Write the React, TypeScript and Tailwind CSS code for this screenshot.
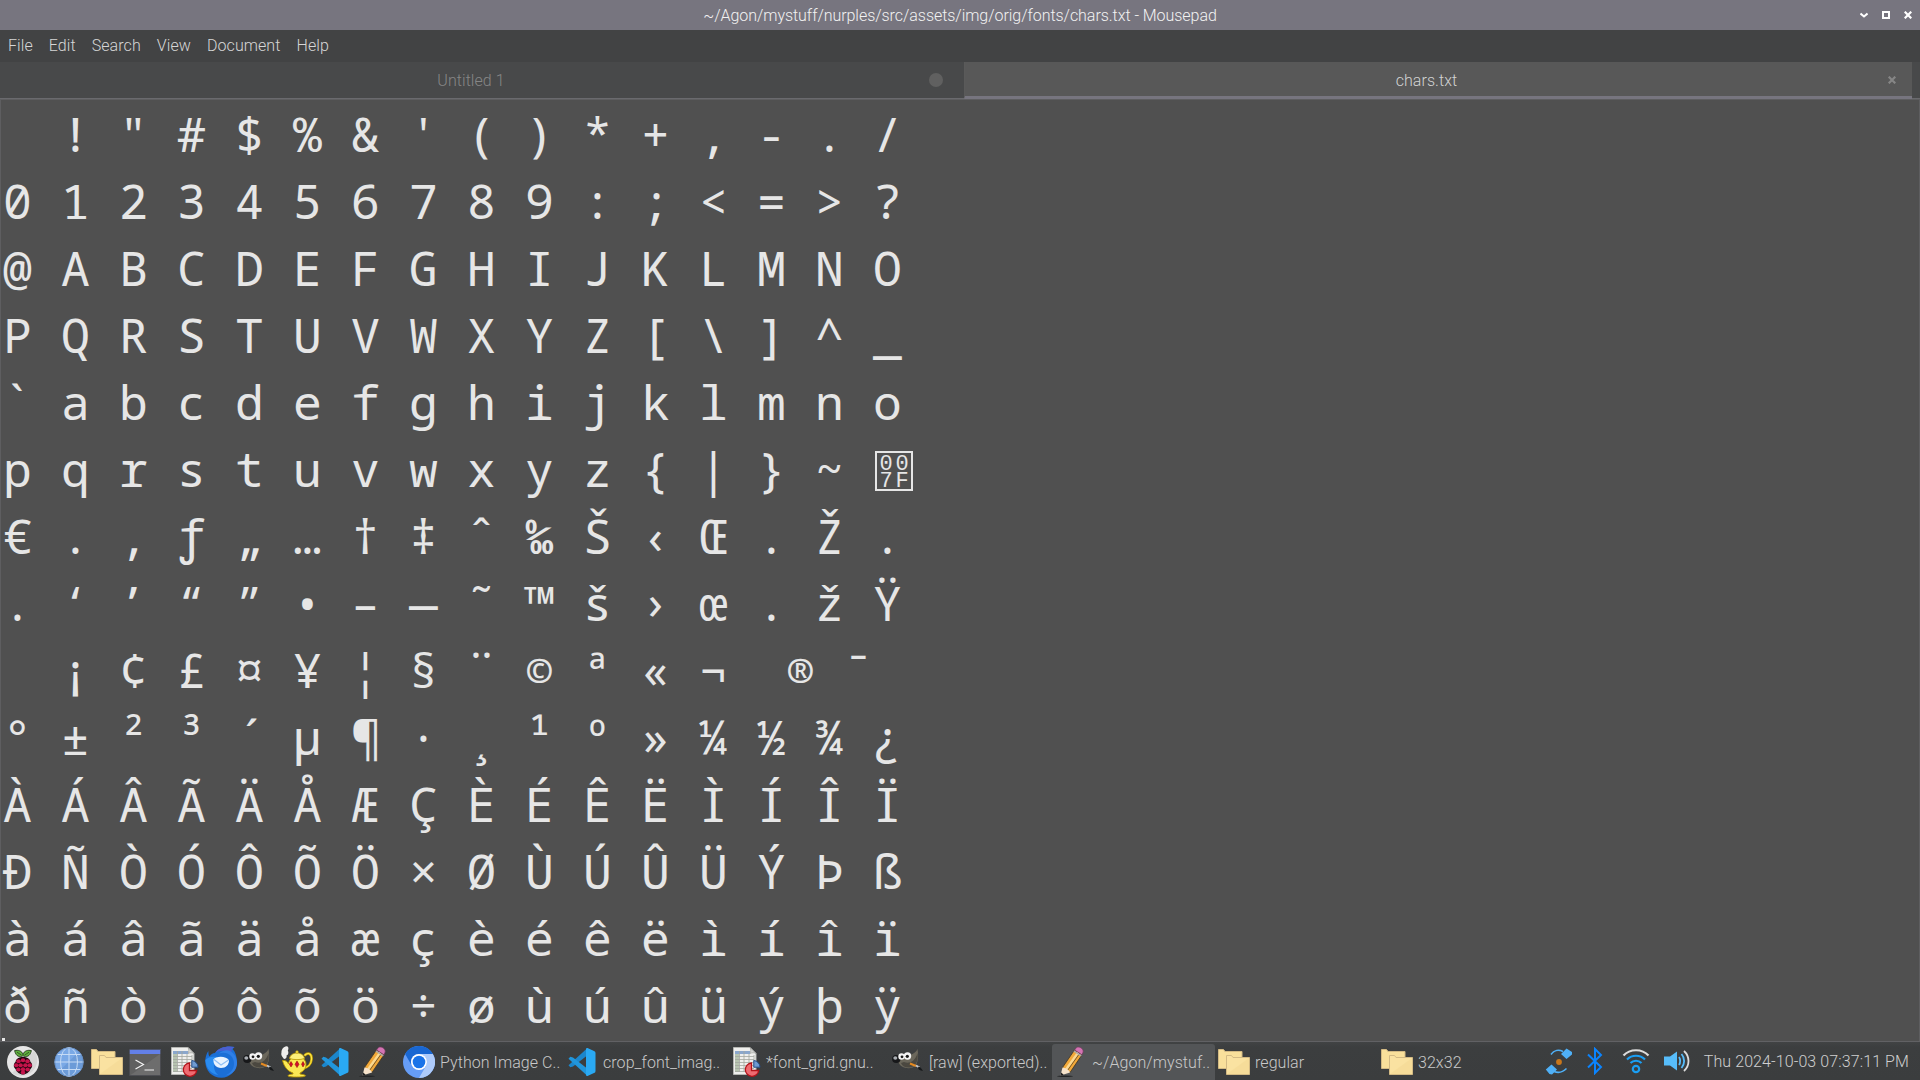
import type { ReactNode } from "react";

const LINES = [
  "  ! \" # $ % & ' ( ) * + , - . /",
  "0 1 2 3 4 5 6 7 8 9 : ; < = > ?",
  "@ A B C D E F G H I J K L M N O",
  "P Q R S T U V W X Y Z [ \\ ] ^ _",
  "` a b c d e f g h i j k l m n o",
  "p q r s t u v w x y z { | } ~ ",
  "€ . ‚ ƒ „ … † ‡ ˆ ‰ Š ‹ Œ . Ž .",
  ". ‘ ’ “ ” • – — ˜ ™ š › œ . ž Ÿ",
  "  ¡ ¢ £ ¤ ¥ ¦ § ¨ © ª « ¬  ® ¯",
  "° ± ² ³ ´ µ ¶ · ¸ ¹ º » ¼ ½ ¾ ¿",
  "À Á Â Ã Ä Å Æ Ç È É Ê Ë Ì Í Î Ï",
  "Ð Ñ Ò Ó Ô Õ Ö × Ø Ù Ú Û Ü Ý Þ ß",
  "à á â ã ä å æ ç è é ê ë ì í î ï",
  "ð ñ ò ó ô õ ö ÷ ø ù ú û ü ý þ ÿ",
];

const UNPRINTABLE_LINE = 5;

function Icon({ children }: { children: ReactNode }) {
  return (
    <svg width="32" height="32" viewBox="0 0 32 32" className="block shrink-0">
      {children}
    </svg>
  );
}

function Raspberry() {
  const drupes = [
    [16, 14.3], [11.5, 15.2], [20.5, 15.2], [9.3, 19.2], [22.7, 19.2], [13.6, 19.2], [18.4, 19.2],
    [11.4, 23.4], [20.6, 23.4], [16, 23.2], [16, 26.4],
  ];
  return (
    <Icon>
      <circle cx="16" cy="16" r="16" fill="#e6e6e6" />
      <path d="M5 27A16 16 0 0 0 27.3 4.7Z" fill="#d6d6d6" />
      <path d="M16 9.800C13 11.400 9 11 7.600 4.600 11 3.800 15 4.600 16 8.600 17 4.600 21 3.800 24.400 4.600 23 11 19 11.400 16 9.800Z" fill="#5fae3e" stroke="#1b2a14" strokeWidth=".8" />
      <path d="M10 6.200 14.500 9.200M22 6.200 17.500 9.200" stroke="#1b2a14" strokeWidth=".6" />
      <path d="M16 11c4 0 7 1.500 7.500 5 2.500 2 2 5.500 0 7-1 3-4.500 5.500-7.500 5.500S9.500 26 8.500 23c-2-1.500-2.500-5 0-7C9 12.500 12 11 16 11Z" fill="#22060f" />
      {drupes.map(([x, y]) => (
        <ellipse key={`${x}-${y}`} cx={x} cy={y} rx="2.250" ry="2" fill="#c4134b" />
      ))}
    </Icon>
  );
}

function Globe() {
  return (
    <Icon>
      <circle cx="16" cy="16" r="14.500" fill="#7aa9e6" />
      <path d="M5.500 26A14.500 14.500 0 0 0 26 5.500Z" fill="#6c9bd8" />
      <g fill="none" stroke="#c6dbf5" strokeWidth="1">
        <path d="M16 1.500v29M1.500 16h29M4 8.500h24M4 23.500h24" />
        <ellipse cx="16" cy="16" rx="8.500" ry="14.500" />
      </g>
      <circle cx="16" cy="16" r="14.200" fill="none" stroke="#5e87bd" strokeWidth=".7" />
    </Icon>
  );
}

function Folders() {
  return (
    <Icon>
      <g stroke="#d3ba84" strokeWidth="1">
        <path d="M.5 22.500v-19h5l1.500 2h17v17Z" fill="#f9e09b" />
        <path d="M8.500 28.500v-19h5l1.500 2h16.500v17Z" fill="#fae2a1" />
      </g>
      <path d="M9 28 31 12v16Z" fill="#f3d894" opacity=".6" />
    </Icon>
  );
}

function Terminal() {
  return (
    <Icon>
      <rect x=".5" y="3" width="31" height="26.500" fill="#606060" />
      <path d="M1 29.500 31 8v21.500Z" fill="#6d6d6d" />
      <rect x="0" y="3" width="32" height="5" fill="#6380e8" />
      <rect x=".5" y="3.500" width="31" height="26" fill="none" stroke="#4a4b52" strokeWidth=".8" />
      <path d="M6.500 14l8 4.500-8 4.500M15.500 24h9.500" fill="none" stroke="#f4f4f4" strokeWidth="1.200" />
    </Icon>
  );
}

function Gnumeric() {
  return (
    <Icon>
      <path d="M4.500 1.500H21l6 6v21H4.500Z" fill="#efefed" stroke="#b5b6b3" />
      <path d="M21 1.500c1 2 1 4 0 6 2-1 4-1 6 0Z" fill="#d4d5d2" stroke="#a2a49f" strokeWidth=".7" />
      <rect x="6" y="5" width="15" height="3" fill="#8ba7cc" />
      <rect x="6" y="8" width="4" height="18" fill="#b7c4b0" />
      <path d="M6 10.500h19M6 13.500h19M6 16.500h19M6 19.500h19M6 22.500h19M6 25.500h14M10.500 5v21M15 5v21M20 8v18M25 9v13" stroke="#a3a7a0" strokeWidth=".8" />
      <path d="M22.500 17a6.700 6.700 0 1 0 7.200 7.500h-7.200Z" fill="#ef6b71" stroke="#b3131a" strokeWidth="1.300" />
      <path d="M24.800 14.500v6.700h6.200a6.800 6.800 0 0 0-6.200-6.700Z" fill="#6f9bd2" stroke="#26508c" />
    </Icon>
  );
}

function Thunderbird() {
  return (
    <Icon>
      <path d="M10 7C14 1 23-.5 29.500 1c-1 1-1.500 1.500-1.800 2.200C30.500 6 32 11 31.800 16 31.500 25 25 31.700 16.500 31.700 7 31.700.5 25 .3 15.500.2 11 2 6.500 3.500 5c-.3 3 .3 4.500 1.200 5.500C5.500 8.500 8 7 10 7Z" fill="#1b6fd6" />
      <path d="M10 7C14 1 23-.5 29.500 1c-3 1-4 4-2 7-5-4-13-4-17.500-1Z" fill="#4a5fd0" />
      <path d="M14 7.500c8-2.500 15 2.500 15 10 0 6-4 10-9 12 9-1 12.500-7.500 12-14C31 8 25 3.500 20 4.500c-3 .5-4.500 1.500-6 3Z" fill="#2f7fe6" />
      <path d="M.3 14c1 9 6 14 13 15-4-3-5-8-4-13l3-5C7 10 3 11 .3 14Z" fill="#2a8cf0" />
      <path d="M8.500 13.500c2-3.500 13-4 15.500 1 0 4-3 7.500-8 7.500s-8-4-7.500-8.500Z" fill="#e9f4ff" />
      <path d="M9 13.500l7 5.500 7.500-5" fill="none" stroke="#8fbff4" strokeWidth="1.200" />
    </Icon>
  );
}

function Gimp() {
  return (
    <Icon>
      <path d="M4 12c4-1 7-3 10-3 5 0 9-1 11.500-6C26.500 8 26.500 15 24 19c-3 4-10 4-14 1.500-3-1.500-3.500-5-6-8.500Z" fill="#6b675b" />
      <path d="M12 16c5 2 11 0 13.500-9C26.500 15 24 21.500 17 21.500c-4 0-7-1.500-8-4.500Z" fill="#4b4840" />
      <ellipse cx="4.300" cy="13" rx="4.200" ry="4" fill="#17181a" />
      <ellipse cx="3.300" cy="12" rx="2" ry="1.800" fill="#a9adb2" />
      <circle cx="9.500" cy="10.500" r="3.200" fill="#f4f4f4" />
      <circle cx="15.500" cy="10" r="3.700" fill="#f4f4f4" />
      <circle cx="10" cy="10.800" r="1.400" fill="#1a1a1a" />
      <circle cx="15.300" cy="10.300" r="1.600" fill="#1a1a1a" />
      <path d="M18 17.500 24 20" stroke="#e58a22" strokeWidth="1.900" />
      <path d="M24 19.500l3.500 2" stroke="#c9ccd0" strokeWidth="2" />
      <path d="M26.500 20.500c2.500.5 3 2.500 4.500 4.500-3-.5-4.500-1.500-5-3Z" fill="#17191b" />
    </Icon>
  );
}

function Lamp() {
  return (
    <Icon>
      <path d="M3 13C1.500 11-.5 9 .5 7 0 4 2 1 4.500.500c3-.8 3.500 2 2.300 4 1 2 .7 4-1.300 5 .5 2-.5 3-2.500 3.500Z" fill="#eeeeec" />
      <path d="M23.500 9.500c4-4 7.500-1.500 7 4-.3 5-4 8-8 8.500" fill="none" stroke="#cfa800" strokeWidth="2.600" />
      <path d="M23.500 9.500c4-4 7.500-1.500 7 4-.3 5-4 8-8 8.500" fill="none" stroke="#fce94f" strokeWidth="1.100" />
      <path d="M1.500 14.500c3-.5 5 1 6 3.500.5-5 4.500-7.500 8.500-8 5 .5 9 3.500 9 8.500 0 5-3.500 7-6 8.500v1c3 .5 5.500 1 5.500 1.800S20 31 15.500 31 7 30.700 7 29.800s2-1.500 5-1.800v-1C6 25 3 20 1.500 14.500Z" fill="#fbe955" stroke="#b89400" strokeWidth=".9" />
      <path d="M8.500 12.500C9 8.500 13 7 16 7s7 1.500 7.500 5.500c-4 1.500-11 1.500-15 0Z" fill="#fdf07a" stroke="#b89400" strokeWidth=".8" />
      <circle cx="16" cy="6" r="1.300" fill="#fce94f" stroke="#b89400" strokeWidth=".6" />
      <path d="M10 15.500l1.700 2.700L10 21l-1.700-2.800ZM16 15l2 3.300-2 3.300-2-3.300ZM22 15.500l1.500 2.700L22 21l-1.500-2.800Z" fill="#d4102c" stroke="#8f0000" strokeWidth=".5" />
    </Icon>
  );
}

function Code() {
  return (
    <Icon>
      <path d="M21.500 2 2.500 19.300l1.800 1.900L7 20.500 21.500 9.300Z" fill="#1b86cc" />
      <path d="M21.500 30 2.500 12.700l1.800-1.900L7 11.500l14.500 11.200Z" fill="#2196dc" />
      <path d="M21.500 2 28 5a2 2 0 0 1 1.500 1.800v18.400A2 2 0 0 1 28 27l-6.500 3c-1 .3-1.500-.5-1.500-1.500v-25c0-1 .5-1.800 1.500-1.500Z" fill="#2aa9f3" />
    </Icon>
  );
}

function Pencil() {
  return (
    <Icon>
      <ellipse cx="10" cy="30.300" rx="8" ry=".7" fill="#222425" />
      <path d="M7.500 21.500 19.500 4l7.500 4.800L15 26.500Z" fill="#f2a93a" stroke="#3c3223" strokeWidth=".8" />
      <path d="M11 23.500 23.300 6.500" stroke="#fbd991" strokeWidth="2.400" />
      <path d="M12.300 24.800 24.600 7.400" stroke="#5a4526" strokeWidth=".8" />
      <path d="M19.500 4 21.500 1.500c3-1.500 7 1 6.700 4.500L27 8.800Z" fill="#d474b3" stroke="#6b3a5b" strokeWidth=".7" />
      <path d="M18.800 5l7.500 4.900" stroke="#a7a7ad" strokeWidth="1.400" />
      <path d="M7.500 21.500 5.500 29.500 15 26.500c-.5-2-3.500-4.500-7.500-5Z" fill="#f6e3cb" />
      <path d="M6.200 26.600 5.500 29.800l3.200-1.100Z" fill="#1e1e1e" />
    </Icon>
  );
}

function Chromium() {
  return (
    <Icon>
      <circle cx="16" cy="16" r="16" fill="#669df6" />
      <path d="M2.140 8A16 16 0 0 1 29.860 8H16a8 8 0 0 0-7 12Z" fill="#1967d2" />
      <path d="M16 8h13.860A16 16 0 0 1 16 32l6.930-12A8 8 0 0 0 16 8Z" fill="#aecbfa" />
      <circle cx="16" cy="16" r="8" fill="#fff" />
      <circle cx="16" cy="16" r="6.300" fill="#1a73e8" />
    </Icon>
  );
}

const LAUNCHERS = [Globe, Folders, Terminal, Gnumeric, Thunderbird, Gimp, Lamp, Code, Pencil];

const TASKS = [
  { icon: Chromium, label: "Python Image C.." },
  { icon: Code, label: "crop_font_imag.." },
  { icon: Gnumeric, label: "*font_grid.gnu.." },
  { icon: Gimp, label: "[raw] (exported).." },
  { icon: Pencil, label: "~/Agon/mystuf..", active: true },
  { icon: Folders, label: "regular" },
  { icon: Folders, label: "32x32" },
];

function TitleBar() {
  return (
    <header className="relative flex h-[30px] shrink-0 items-center justify-center bg-[#77757f] text-[#f2f2f2]">
      <span className="pt-[2px] tracking-[-0.045px]">
        ~/Agon/mystuff/nurples/src/assets/img/orig/fonts/chars.txt - Mousepad
      </span>
      <div className="absolute top-[11px] right-2 flex gap-[14px] text-white">
        <svg width="8" height="8" viewBox="0 0 8 8" fill="none" stroke="currentColor" strokeWidth="2">
          <path d="M.5 2.500 4 5.500 7.500 2.500" />
        </svg>
        <svg width="8" height="8" viewBox="0 0 8 8" fill="none" stroke="currentColor" strokeWidth="2">
          <path d="M1 1h6v6H1Z" />
        </svg>
        <svg width="8" height="8" viewBox="0 0 8 8" fill="none" stroke="currentColor" strokeWidth="2.200">
          <path d="M.7.7 7.300 7.300M7.300.7.7 7.300" />
        </svg>
      </div>
    </header>
  );
}

function Tabs() {
  return (
    <div className="flex h-[37px] shrink-0 bg-[#48494a]">
      <div className="flex h-full w-[964px] items-center border-b border-[#6a6a6e] pr-[21px]">
        <span className="flex-1 pt-[2px] pl-[13px] text-center tracking-[0.06px] text-[#868686]">Untitled 1</span>
        <span className="h-[14px] w-[14px] rounded-full bg-[#606060]" />
      </div>
      <div className="flex h-full w-[948px] items-center border-b-[3px] border-l border-b-[#77757f] border-l-[#5a5a5a] bg-[#585858] pt-[2px] pr-[16px]">
        <span className="flex-1 pt-[2px] text-center tracking-[0.06px] text-[#d3d3d3]">chars.txt</span>
        <svg width="8" height="8" viewBox="0 0 8 8" stroke="#868686" strokeWidth="2.200">
          <path d="M.7.7 7.300 7.300M7.300.7.7 7.300" />
        </svg>
      </div>
      <div className="h-full flex-1 border-b border-[#6a6a6e]" />
    </div>
  );
}

function ControlCodeBox() {
  return (
    <span className="mt-[16px] ml-[2px] grid h-[40px] w-[38px] grid-cols-2 content-center justify-items-center border-2 border-[#e6e6e6] px-[1px] pt-[3px] font-['Liberation_Mono',monospace] text-[22px] leading-[17px] tracking-normal">
      <span>0</span>
      <span>0</span>
      <span>7</span>
      <span>F</span>
    </span>
  );
}

function Editor() {
  return (
    <main className="min-h-0 flex-1 overflow-hidden border-t border-r border-l border-[#5e5e60] bg-[#505050] pl-[2px] font-['Noto_Sans_Mono',monospace] text-[48px] font-normal tracking-[0.2px] text-[#e6e6e6]">
      {LINES.map((line, i) => (
        <div key={line} className="flex h-[67px] leading-[67px] whitespace-pre">
          <span>{line}</span>
          {i === UNPRINTABLE_LINE && <ControlCodeBox />}
        </div>
      ))}
      <div className="-ml-px h-[3px] w-[3px] bg-[#e6e6e6]" />
    </main>
  );
}

function Tray() {
  return (
    <div className="flex h-[38px] items-center pr-[11px]">
      <svg width="28" height="28" viewBox="0 0 28 28" className="block">
        <path d="M6 7.500C9 3 14 2.500 18 4.500M9 24.500c5 2 9 .5 12.500-3" fill="none" stroke="#4fb0f7" strokeWidth="1.500" />
        <path d="M21.500 1.500 27 5v2.500L21.500 12l-5.500-5ZM6.500 17.500l5.500 5-5 5L4.500 27 .8 22.500Z" fill="#4fb0f7" />
        <circle cx="14" cy="15" r="2.900" fill="#c9761a" />
      </svg>
      <svg width="16" height="28" viewBox="0 0 16 28" className="ml-[14px] block" fill="none" stroke="#0a84ff" strokeWidth="2">
        <path d="M1 7.500 14 20 8 26V2l6 6L1 20.500" />
      </svg>
      <svg width="28" height="26" viewBox="0 0 28 26" className="ml-[19px] block" fill="none" strokeWidth="2.200">
        <path d="M1.500 7.500C8 .5 20 .5 26.500 7.500" stroke="#dcdcdc" />
        <path d="M5 11.500c5-5 13-5 18 0M8.500 15c3-3 8-3 11 0" stroke="#1a9ff5" />
        <circle cx="14" cy="21" r="3.200" stroke="#1a9ff5" />
      </svg>
      <svg width="28" height="24" viewBox="0 0 28 24" className="ml-[13px] block" fill="none" strokeWidth="1.800">
        <path d="M1 7.500h6l7-5v19l-7-5H1Z" fill="#57bdfb" />
        <path d="M16 8c1.500 2 1.500 6 0 8M18.500 5c3.500 4 3.500 10 0 14" stroke="#57bdfb" />
        <path d="M21 2c6 5.500 6 14.500 0 20" stroke="#dcdcdc" />
      </svg>
      <span className="ml-[13px] pt-[2px] tracking-[0.1px] text-[#cfcfcf]">Thu 2024-10-03 07:37:11 PM</span>
    </div>
  );
}

function Panel() {
  return (
    <footer className="flex h-[39px] shrink-0 items-center border-t border-[#616164] bg-[linear-gradient(#414344,#3c3e3f_5px,#3b3d3e)]">
      <div className="flex w-[400px] shrink-0 items-center gap-[6px] pt-[2px] pl-[7px]">
        <div className="mr-[8px]">
          <Raspberry />
        </div>
        {LAUNCHERS.map((Launcher) => (
          <Launcher key={Launcher.name} />
        ))}
      </div>
      {TASKS.map(({ icon: TaskIcon, label, active }) => (
        <div
          key={label}
          className={`mt-[2px] flex h-[36px] w-[163px] shrink-0 items-center rounded-t-[3px] pl-[3px] ${active ? "bg-[#535557]" : ""}`}
        >
          <TaskIcon />
          <span className="ml-[5px] pt-[2px] tracking-[0.06px] whitespace-nowrap text-[#c9c9c9]">{label}</span>
        </div>
      ))}
      <div className="flex-1" />
      <Tray />
    </footer>
  );
}

export default function App() {
  return (
    <div className="flex h-[1080px] w-[1920px] flex-col overflow-hidden bg-[#505050] font-['Roboto',sans-serif] text-[16px] leading-[20px] font-light">
      <TitleBar />
      <nav className="flex h-[32px] shrink-0 items-center gap-4 bg-[#424344] pl-2 tracking-[0.08px] text-[#d6d6d6]">
        {["File", "Edit", "Search", "View", "Document", "Help"].map((item) => (
          <span key={item}>{item}</span>
        ))}
      </nav>
      <Tabs />
      <Editor />
      <Panel />
    </div>
  );
}
